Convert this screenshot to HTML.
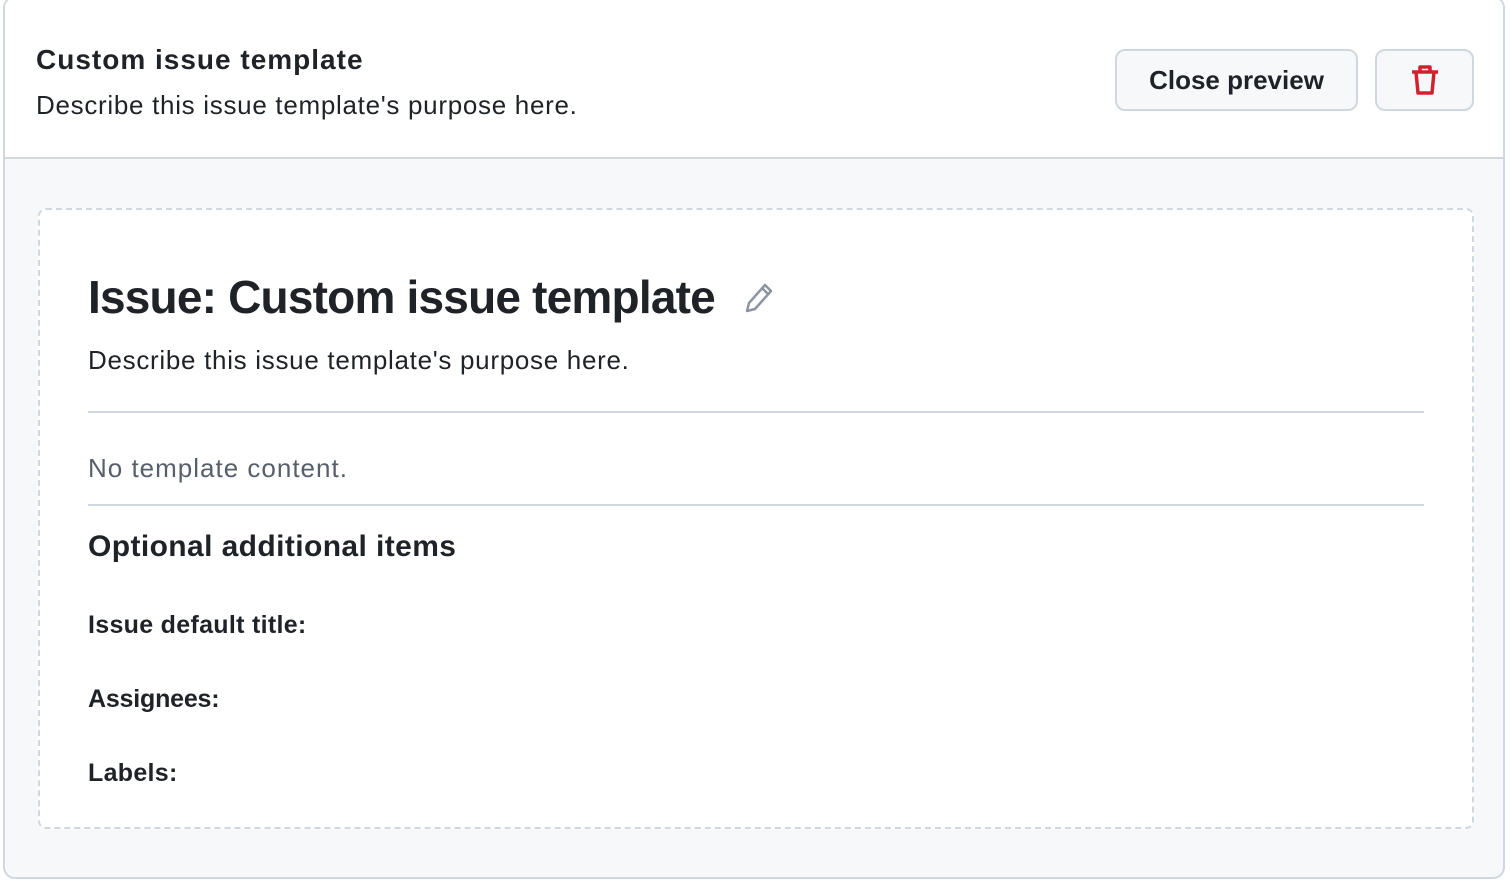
<!DOCTYPE html>
<html><head><style>
body{margin:0;width:1510px;height:883px;background:#fff;font-family:"Liberation Sans",sans-serif;color:#1f2328;overflow:hidden}
.outer{position:absolute;left:3px;top:-4px;width:1502px;height:883px;border:2px solid #d0d7de;border-radius:12px;background:#f6f8fa;box-sizing:border-box;overflow:hidden}
.head{position:absolute;left:0;top:0;right:0;height:159px;background:#fff;border-bottom:2px solid #d0d7de}
.t{position:absolute;left:31px;top:46px;font-size:28px;font-weight:bold;letter-spacing:1px}
.d{position:absolute;left:31px;top:92px;font-size:26px;letter-spacing:0.7px}
.btn{position:absolute;top:51px;height:62px;border:2px solid #d0d7de;border-radius:10px;background:#f6f8fa;box-sizing:border-box;display:flex;align-items:center;justify-content:center}
.box{position:absolute;left:33px;top:210px;width:1436px;height:621px;border:2px dashed #d0d7de;border-radius:8px;background:#fff;box-sizing:border-box}
.in{position:absolute;left:48px;right:48px}
hr{border:0;border-top:2px solid #d0d7de;margin:0}
.lab{position:absolute;left:48px;font-size:25px;font-weight:bold;letter-spacing:0.3px}
</style></head><body>
<div class="outer">
 <div class="head">
  <div class="t">Custom issue template</div>
  <div class="d">Describe this issue template's purpose here.</div>
  <div class="btn" style="left:1110px;width:243px;font-size:26px;font-weight:bold;letter-spacing:0px">Close preview</div>
  <div class="btn" style="left:1370px;width:99px">
   <svg width="28" height="32" viewBox="0 0 28 32" fill="none" stroke="#cf222e" stroke-width="3.5" stroke-linejoin="round"><path d="M1 8H27M9 8V3H19V8M5 8L7 29H21L23 8"/></svg>
  </div>
 </div>
 <div class="box">
  <div class="in" style="top:60px;font-size:46px;font-weight:bold;letter-spacing:-0.8px">Issue: Custom issue template
   <svg width="32" height="34" viewBox="0 0 32 34" style="margin-left:16px;vertical-align:-2px" fill="none" stroke="#8c959f" stroke-width="2.5" stroke-linejoin="round"><path d="M4 30L6 22L22 4L28 10L12 28Z M19 7L25 13"/></svg></div>
  <div class="in" style="top:135px;font-size:26px;letter-spacing:0.7px">Describe this issue template's purpose here.</div>
  <div class="in" style="top:201px"><hr></div>
  <div class="in" style="top:243px;font-size:26px;color:#57606a;letter-spacing:1px">No template content.</div>
  <div class="in" style="top:294px"><hr></div>
  <div class="in" style="top:320px;font-size:30px;font-weight:bold;letter-spacing:0.4px">Optional additional items</div>
  <div class="lab" style="top:401px">Issue default title:</div>
  <div class="lab" style="top:475px;letter-spacing:-0.2px">Assignees:</div>
  <div class="lab" style="top:549px">Labels:</div>
 </div>
</div>
</body></html>
